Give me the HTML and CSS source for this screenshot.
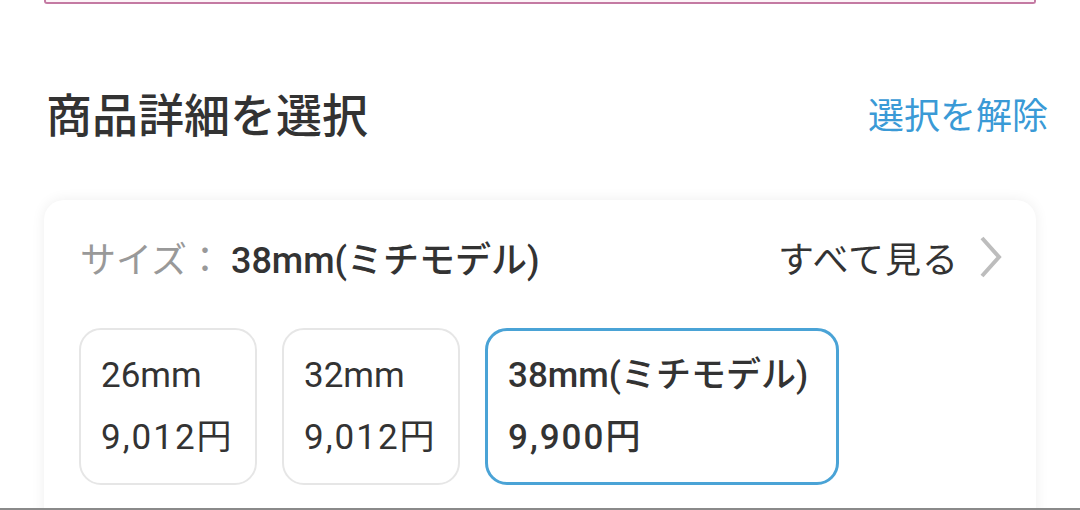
FILE: index.html
```html
<!DOCTYPE html>
<html lang="ja">
<head>
    <meta charset="UTF-8">
    <meta name="viewport" content="width=device-width, initial-scale=1.0">
    <title>商品詳細を選択</title>
    <link rel="stylesheet" href="styles.css">
</head>
<body>
    <div class="promo"></div>

    <div class="section-head">
        <h2 class="section-title">商品詳細を選択</h2>
        <a class="clear-link" href="#">選択を解除</a>
    </div>

    <div class="variant-card">
        <div class="variant-row">
            <div class="variant-label">
                <span class="variant-key">サイズ：</span>
                <span class="variant-value">38mm(ミチモデル)</span>
            </div>
            <a class="see-all" href="#">
                すべて見る
                <svg class="chevron" width="24" height="42" viewBox="0 0 24 42">
                    <path d="M3 2 L20 21 L3 40" fill="none" stroke="#bdbdbd" stroke-width="4"/>
                </svg>
            </a>
        </div>

        <div class="options">
            <div class="option">
                <div class="option-name">26mm</div>
                <div class="option-price">9,012円</div>
            </div>
            <div class="option">
                <div class="option-name">32mm</div>
                <div class="option-price">9,012円</div>
            </div>
            <div class="option selected">
                <div class="option-name">38mm(ミチモデル)</div>
                <div class="option-price">9,900円</div>
            </div>
        </div>
    </div>

    <div class="bottom-bar"></div>
</body>
</html>
```

FILE: styles.css
```css
body {
    margin: 0;
    padding: 0 44px;
    background-color: #fff;
    color: #333;
    font-family: Roboto, "Noto Sans CJK JP", sans-serif;
}
a {
    text-decoration: none;
}

.promo {
    height: 2px;
    border: 2px solid #c47aa3;
    border-top: none;
    border-radius: 0 0 3px 3px;
    background-color: #fdf4f8;
}

.section-head {
    display: flex;
    align-items: center;
    justify-content: space-between;
    margin-top: 82px;
    height: 60px;
}
.section-title {
    margin: 0 0 0 2px;
    font-size: 46px;
    font-weight: 500;
    line-height: 60px;
    color: #333;
}
.clear-link {
    margin: 2px -12px 0 0;
    font-size: 36px;
    color: #3a9ad6;
    line-height: 60px;
}

.variant-card {
    margin-top: 54px;
    padding: 37px 33px 0 35px;
    height: 400px;
    border-radius: 20px;
    background-color: #fff;
    box-shadow: 0 0 14px rgba(0, 0, 0, 0.07);
}
.variant-row {
    display: flex;
    align-items: center;
    justify-content: space-between;
    height: 40px;
}
.variant-label {
    display: flex;
    align-items: center;
    font-size: 36px;
    padding-left: 1px;
}
.variant-key {
    color: #999;
    margin-right: 8px;
}
.variant-value {
    font-weight: 500;
    color: #333;
}
.see-all {
    display: flex;
    align-items: center;
    gap: 20px;
    font-size: 36px;
    letter-spacing: 1px;
    color: #333;
}

.options {
    display: flex;
    gap: 25px;
    margin-top: 51px;
}
.option {
    display: flex;
    flex-direction: column;
    justify-content: center;
    gap: 18px;
    box-sizing: border-box;
    width: 178px;
    height: 157px;
    padding: 0 20px;
    border: 2px solid #e6e6e6;
    border-radius: 22px;
    font-size: 35px;
    line-height: 44px;
    color: #333;
}
.option-price {
    letter-spacing: 2px;
}
.option.selected {
    width: 354px;
    border: 3px solid #4aa3d6;
    font-weight: 500;
}

.bottom-bar {
    position: fixed;
    left: 0;
    right: 0;
    bottom: 0;
    height: 2px;
    background-color: #8a8a8a;
}
```
